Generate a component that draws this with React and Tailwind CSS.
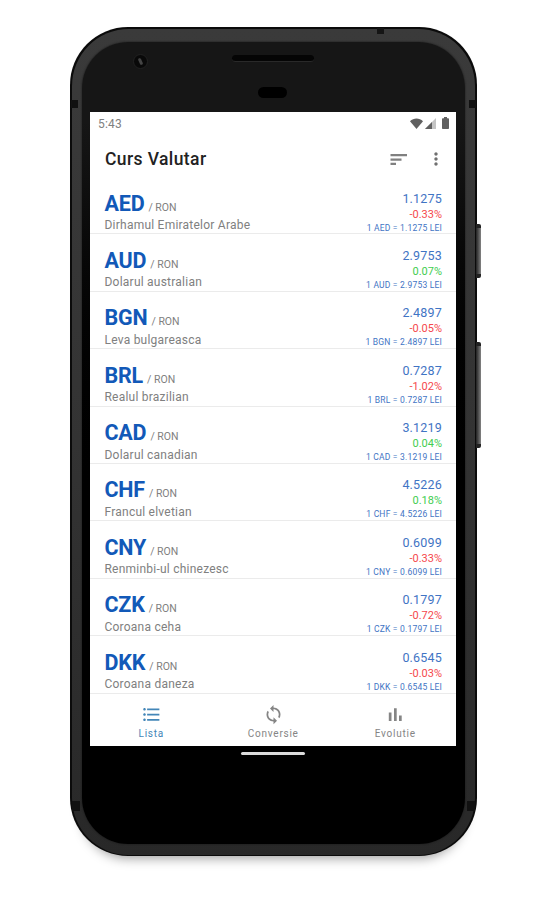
import React, { useState } from 'react';
import clsx from 'clsx';
import { MdFormatListBulleted, MdLoop, MdMoreVert } from 'react-icons/md';

const rates = [
  { code: 'AED', name: 'Dirhamul Emiratelor Arabe', value: '1.1275', change: '-0.33%' },
  { code: 'AUD', name: 'Dolarul australian', value: '2.9753', change: '0.07%' },
  { code: 'BGN', name: 'Leva bulgareasca', value: '2.4897', change: '-0.05%' },
  { code: 'BRL', name: 'Realul brazilian', value: '0.7287', change: '-1.02%' },
  { code: 'CAD', name: 'Dolarul canadian', value: '3.1219', change: '0.04%' },
  { code: 'CHF', name: 'Francul elvetian', value: '4.5226', change: '0.18%' },
  { code: 'CNY', name: 'Renminbi-ul chinezesc', value: '0.6099', change: '-0.33%' },
  { code: 'CZK', name: 'Coroana ceha', value: '0.1797', change: '-0.72%' },
  { code: 'DKK', name: 'Coroana daneza', value: '0.6545', change: '-0.03%' },
];

function BarsIcon({ className }) {
  return (
    <svg className={className} viewBox="0 0 21 21" fill="currentColor">
      <path d="M3.8 8.500h2.700v8.500H3.800zM9 4.200h2.700V17H9zM14 11.500h2.700V17H14z" />
    </svg>
  );
}

const tabs = [
  { id: 'lista', label: 'Lista', icon: MdFormatListBulleted },
  { id: 'conversie', label: 'Conversie', icon: MdLoop },
  { id: 'evolutie', label: 'Evolutie', icon: BarsIcon },
];

function StatusBar() {
  return (
    <div className="flex h-6 shrink-0 items-center justify-between pr-[7px] pl-[8px]">
      <span className="text-[12px] leading-6 tracking-[0.2px] text-[#808080]">5:43</span>
      <div className="mb-[2px] flex items-center text-[#606060]">
        <svg className="h-[11px] w-[13px]" viewBox="0 0 13 11" fill="currentColor">
          <path d="M0 3.2C3.6-.3 9.4-.3 13 3.2L6.5 11z" />
        </svg>
        <svg className="ml-[2px] h-[11px] w-[11px]" viewBox="0 0 11 11">
          <path d="M0 11L11 0v11z" fill="#c4c4c4" />
          <path d="M0 11L7 4v7z" fill="#606060" />
        </svg>
        <svg className="ml-[6px] h-[12px] w-[7px]" viewBox="0 0 7 12" fill="currentColor">
          <path d="M2 0h3v1.2h1.2q.8 0 .8.8v9.2q0 .8-.8.8H.8Q0 12 0 11.200V2q0-.8.8-.8H2z" />
        </svg>
      </div>
    </div>
  );
}

function RateRow({ rate }) {
  const down = rate.change.startsWith('-');

  return (
    <div className="flex h-[57.4px] shrink-0 justify-between border-b border-[#ebebeb] px-[14px]">
      <div className="pt-[12.5px] pl-[0.5px]">
        <div className="flex h-[26.5px] items-baseline leading-[27px]">
          <span className="text-[21.5px] font-bold tracking-[-0.2px] text-[#1259b8]">{rate.code}</span>
          <span className="ml-[4px] pb-px text-[10.5px] leading-[14px] text-[#808080]">/ RON</span>
        </div>
        <p className="text-[12px] leading-[18px] tracking-[0.23px] text-[#808080]">{rate.name}</p>
      </div>
      <div className="pt-[13.5px] text-right">
        <p className="text-[12.5px] leading-4 tracking-[0.2px] text-[#3f74c4]">{rate.value}</p>
        <p className={clsx('text-[11px] leading-[15px]', down ? 'text-[#f5484c]' : 'text-[#43cd50]')}>{rate.change}</p>
        <p className="text-[8.5px] leading-3 tracking-[0.2px] text-[#3f74c4]">
          1 {rate.code} = {rate.value} LEI
        </p>
      </div>
    </div>
  );
}

function BottomNav({ active, onChange }) {
  return (
    <nav className="grid flex-1 grid-cols-3">
      {tabs.map(({ id, label, icon: Icon }) => (
        <button
          key={id}
          onClick={() => onChange(id)}
          className={clsx('flex flex-col items-center pt-[10px]', active === id ? 'text-[#4386b8]' : 'text-[#858585]')}
        >
          <Icon className="h-[21px] w-[21px]" />
          <span className="mt-[3px] pl-[0.5px] text-[10px] leading-3 tracking-[0.75px]">{label}</span>
        </button>
      ))}
    </nav>
  );
}

function PhoneHardware() {
  return (
    <>
      {/* side buttons */}
      <div className="absolute top-[197px] -right-[4px] h-[54px] w-[5px] rounded-r-[2px] border-y-4 border-[#222] bg-linear-to-r from-[#222] to-[#858585]" />
      <div className="absolute top-[315px] -right-[4px] h-[106px] w-[5px] rounded-r-[2px] border-y-4 border-[#222] bg-linear-to-r from-[#222] to-[#858585]" />
      {/* antenna bands */}
      <div className="absolute top-[1px] left-[307px] h-[6px] w-[7px] bg-[#151515]" />
      <div className="absolute top-[73px] left-[1px] h-[8px] w-[7px] bg-[#111]" />
      <div className="absolute top-[73px] right-[1px] h-[8px] w-[7px] bg-[#111]" />
      <div className="absolute bottom-[45px] left-[2px] h-[10px] w-[8px] bg-[#111]" />
      <div className="absolute right-[2px] bottom-[45px] h-[10px] w-[8px] bg-[#111]" />
      {/* camera, speaker and sensor */}
      <div className="absolute top-[27px] left-[63px] flex h-[15px] w-[15px] items-center justify-center rounded-full border border-[#222] bg-[#090909]">
        <div className="h-[7px] w-[3px] -rotate-25 rounded-full bg-[#444]" />
      </div>
      <div className="absolute top-[28px] left-[162px] h-[7px] w-[82px] rounded-full border-b border-[#292929] bg-[#050505]" />
      <div className="absolute top-[60px] left-[188px] h-[11px] w-[29px] rounded-full bg-black" />
    </>
  );
}

export default function App() {
  const [active, setActive] = useState('lista');

  return (
    <div className="flex h-[900px] w-[548px] items-start overflow-hidden bg-white pt-[27px] pl-[70px] font-['Roboto',sans-serif]">
      <div className="relative h-[829px] w-[406.5px] rounded-[58px] bg-[#0b0b0b] p-[1.5px] shadow-[0_14px_12px_-12px_rgba(0,0,0,0.4)]">
        <div className="h-full rounded-[57px] bg-linear-to-b from-[#3a3a3a] via-[#333] to-[#282828] px-[10.5px] pt-[13px] pb-[10.5px]">
          <div className="flex h-full flex-col rounded-[46px] bg-linear-to-b from-[#161616] from-10% to-black to-60% pt-[70.5px] pr-[8.5px] pl-[8px] shadow-[0_0_2px_#161616]">
            <main className="flex h-[634px] shrink-0 flex-col bg-white">
              <StatusBar />
              <header className="flex h-[41px] shrink-0 items-center justify-between pt-[5px] pr-[10px] pl-[15px]">
                <h1 className="text-[17.5px] font-medium tracking-[0.4px] text-[#222]">Curs Valutar</h1>
                <div className="flex items-center gap-[19px] text-[#707070]">
                  <svg className="h-[13px] w-[17px]" viewBox="0 0 17 13" fill="#808080">
                    <path d="M.5 1h16.500v2.200H.5zM.5 5.500h11v2.200H.5zM.5 9.800H6V12H.5z" />
                  </svg>
                  <MdMoreVert className="h-[22px] w-[20px]" />
                </div>
              </header>
              <div className="flex shrink-0 flex-col">
                {rates.map((rate) => (
                  <RateRow key={rate.code} rate={rate} />
                ))}
              </div>
              <BottomNav active={active} onChange={setActive} />
            </main>
            <div className="mt-[6px] h-[3px] w-[64px] self-center rounded-full bg-[#dcdcdc]" />
          </div>
        </div>
        <PhoneHardware />
      </div>
    </div>
  );
}
